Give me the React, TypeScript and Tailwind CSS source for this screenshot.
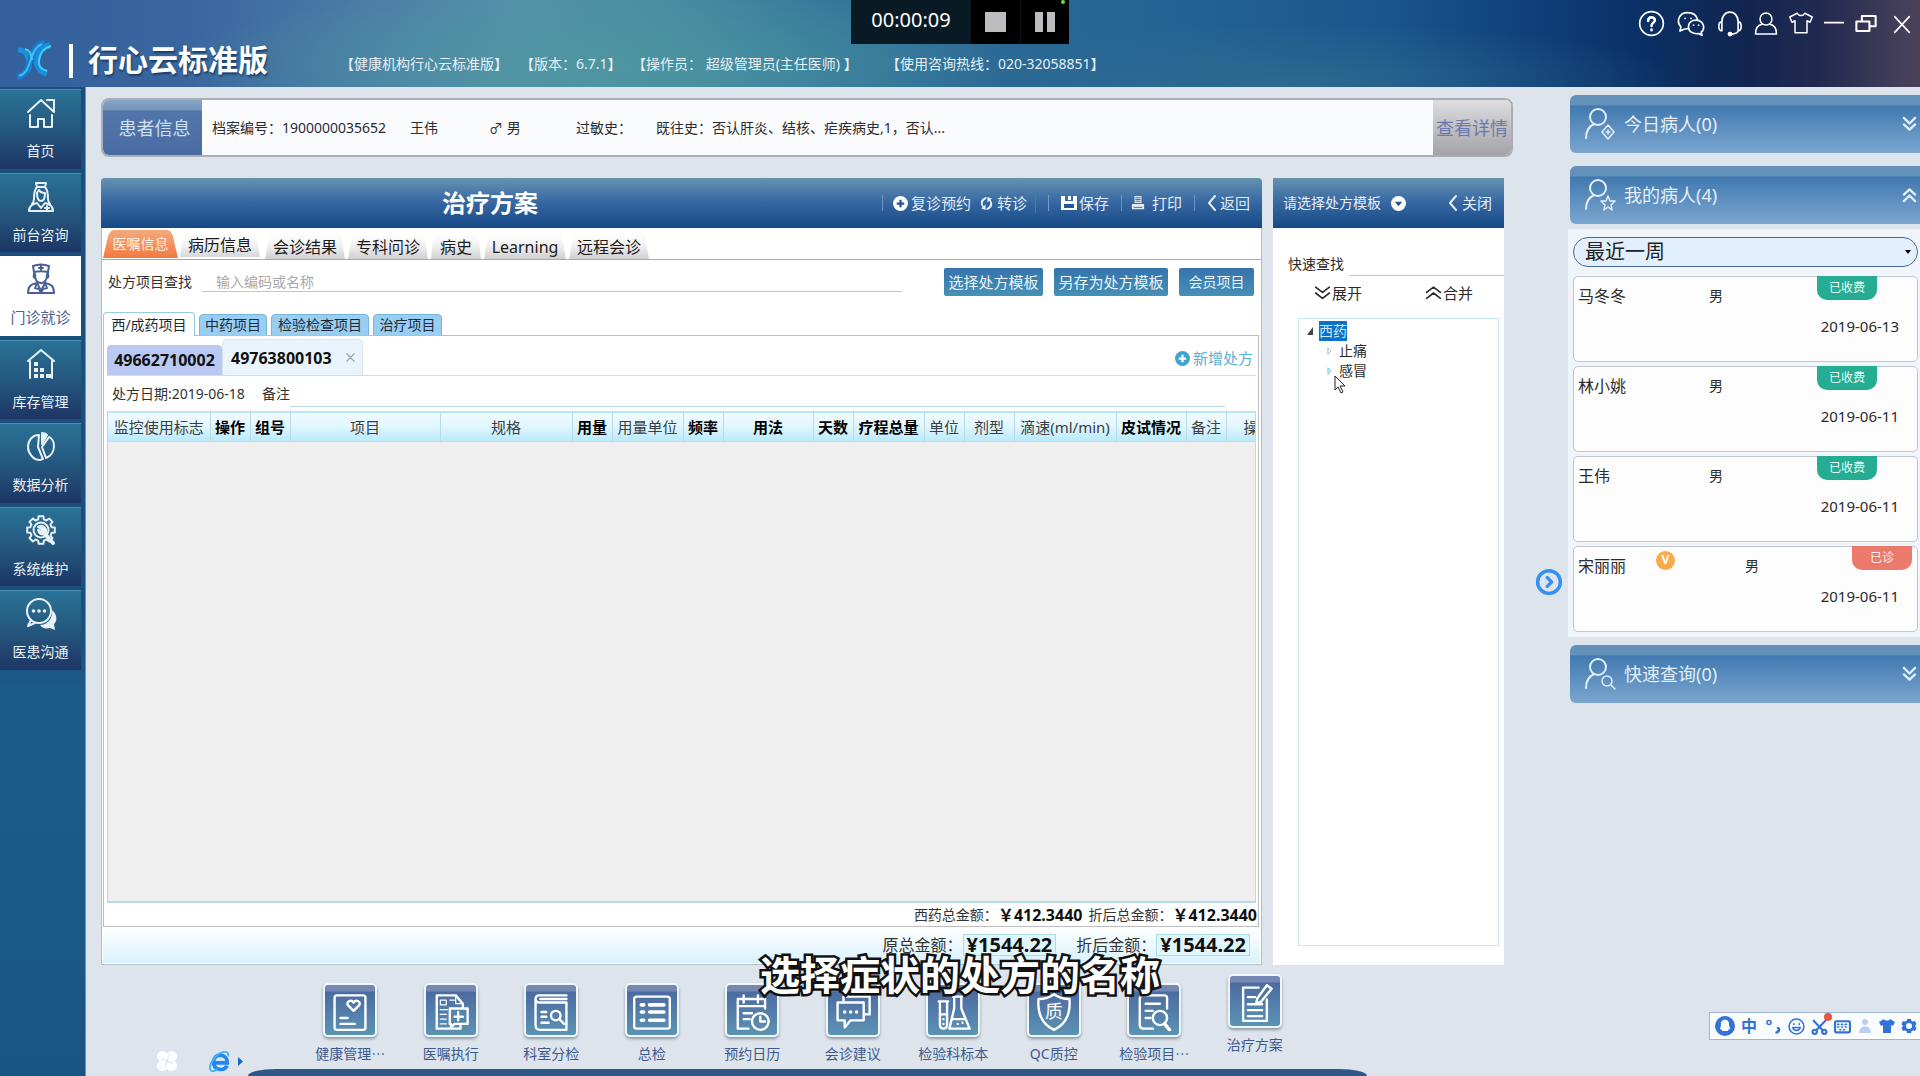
import type { ReactNode } from "react";

interface IconProps {
    className?: string;
    children?: ReactNode;
    box?: string;
    width?: number;
}

function Icon({ className = "w-6 h-6", children, box = "0 0 32 32", width = 2 }: IconProps) {
    return (
        <svg viewBox={box} className={className} fill="none" stroke="currentColor" strokeWidth={width} strokeLinecap="round" strokeLinejoin="round" aria-hidden="true">
            {children}
        </svg>
    );
}

/* ---------- data ---------- */

const navItems = [
    {
        label: "首页",
        icon: <><path d="M3 15 16 3l6 5.500M29 15V3h-7M29 15 22 8.500" /><path d="M5 18v12h8v-8h6v8h8V18" /></>,
    },
    {
        label: "前台咨询",
        icon: <><path d="M11 2h10l-1 4h-8zM12 6c-3 3-3 7-3 12M20 6c3 3 3 7 3 12" /><path d="M12 12c0 6 2 8 4 8s4-2 4-8c-3 0-5-1-6-3-1 2-2 2-2 3zM9 18c0 3-1 4-2 5M23 18c0 3 1 4 2 5" /><path d="M12 22c-5 1-8 3-8 8h24c0-5-3-7-8-8l-4 5zM22 25v4M20 27h4" /></>,
    },
    {
        label: "门诊就诊",
        active: true,
        icon: <><path d="M9 9 8 3c5-2 11-2 16 0l-1 6c-5-1-9-1-14 0zM9 9v4M23 9v4M16 3v4M14 5h4" /><path d="M10 11c0 6 2 9 6 9s6-3 6-9M9 12c-1 1 0 3 1 3M23 12c1 1 0 3-1 3" /><path d="M12 20c-6 1-9 3-9 10h26c0-7-3-9-9-10l-4 8zM12 20l-2 5 4 1 2 4 2-4 4-1-2-5" /></>,
    },
    {
        label: "库存管理",
        icon: <><path d="M3 13 16 2l13 11M5 13v17M27 13v17" /><g fill="currentColor" stroke="none"><path d="M9 14h4v4H9zM9 20h4v4H9zM15 20h4v4h-4zM9 26h4v4H9zM15 26h4v4h-4zM21 26h5v4h-5z" /></g></>,
    },
    {
        label: "数据分析",
        icon: <><path d="M14 4C7 4 3 10 3 16s5 13 12 13l3-1-5-12zM17 16l4 11c5-2 8-7 8-12 0-4-2-8-5-9z" /><path d="M17 13V2c2 0 4 1 5 2z" fill="currentColor" /></>,
    },
    {
        label: "系统维护",
        icon: <><path d="M13.200 4.400 13.600 1.200h4.800l.4 3.200 2.700 1.100 2.600-2 3.400 3.400-2 2.600 1.100 2.700 3.200.4v4.800l-3.200.4-1.100 2.700 2 2.600-3.400 3.400-2.600-2-2.700 1.100-.4 3.200h-4.800l-.4-3.200-2.700-1.100-2.600 2-3.400-3.400 2-2.600-1.100-2.700-3.200-.4v-4.800l3.200-.4 1.100-2.700-2-2.600 3.400-3.400 2.600 2z" /><circle cx="16" cy="15" r="7.500" /><path d="m19 18 9 10" strokeWidth="4" /><path d="M13 12a5 5 0 0 1 7 7 5 5 0 0 1-7-4l3 1 1-2z" fill="currentColor" /></>,
    },
    {
        label: "医患沟通",
        icon: <><circle cx="14" cy="13" r="12" /><path d="m6 22-3 6 7-3" /><g fill="currentColor" stroke="none"><circle cx="8.500" cy="13" r="1.800" /><circle cx="14" cy="13" r="1.800" /><circle cx="19.500" cy="13" r="1.800" /><path d="M27 12c6 5 5 12 2 14l1 6-5-2c-5 1-8 0-10-3 8 0 13-7 12-15z" /></g></>,
    },
];

const mainTabs = [
    { label: "会诊结果", width: "w-20" },
    { label: "专科问诊", width: "w-20" },
    { label: "病史", width: "w-[50px]" },
    { label: "Learning", width: "w-[82px]" },
    { label: "远程会诊", width: "w-20" },
];

const columns = [
    { label: "监控使用标志", width: "w-[102px]" },
    { label: "操作", width: "w-10", bold: true },
    { label: "组号", width: "w-10", bold: true },
    { label: "项目", width: "w-[150px]" },
    { label: "规格", width: "w-[132px]" },
    { label: "用量", width: "w-10", bold: true },
    { label: "用量单位", width: "w-[71px]" },
    { label: "频率", width: "w-10", bold: true },
    { label: "用法", width: "w-[90px]", bold: true },
    { label: "天数", width: "w-10", bold: true },
    { label: "疗程总量", width: "w-[71px]", bold: true },
    { label: "单位", width: "w-10" },
    { label: "剂型", width: "w-[50px]" },
    { label: "滴速(ml/min)", width: "w-[102px]" },
    { label: "皮试情况", width: "w-[70px]", bold: true },
    { label: "备注", width: "w-10" },
];

const patients = [
    { name: "马冬冬", sex: "男", date: "2019-06-13", paid: true },
    { name: "林小姚", sex: "男", date: "2019-06-11", paid: true },
    { name: "王伟", sex: "男", date: "2019-06-11", paid: true },
    { name: "宋丽丽", sex: "男", date: "2019-06-11", paid: false },
];

const dockItems = [
    { label: "健康管理⋯", icon: <><rect x="3" y="2" width="26" height="29" rx="2" /><path d="m19 15-5-5c-1-3 3-5 5-2 2-3 6-1 5 2zM8 21h6M8 26h12" /></> },
    { label: "医嘱执行", icon: <><path d="M26 12V9l-6-7H4v28h20v-3" /><path d="M7 6h5v4H7zM15 6h4M7 14h6M7 18h5M7 22h5M7 26h5M20 3v6h5" strokeWidth="1" /><path d="M15 13h15v13H19l-3 3v-3h-1z" fill="#5485aa" /><path d="M22 16v7M19 20h7" /></> },
    { label: "科室分检", icon: <><path d="M29 2H6c-4 0-4 6 0 6h23v23H7c-3 0-4-1-4-4V5M29 5H7" /><circle cx="20" cy="19" r="4" /><path d="m23 22 4 4M8 16h4M8 20h4M8 25h6" /></> },
    { label: "总检", icon: <><rect x="1" y="3" width="30" height="27" rx="2" /><path d="M7 10h2M14 10h12M7 16h2M14 16h12M7 23h2M14 23h12" strokeWidth="3" /></> },
    { label: "预约日历", icon: <><path d="M27 13V5H4v25h9M9 2v6M21 2v6M4 11h23M9 17h7M9 22h5" /><circle cx="23" cy="24" r="7" /><path d="M23 20v4h4" /></> },
    { label: "会诊建议", icon: <><path d="M8 7V3h22v15h-4" /><path d="M3 8h22v15H14l-5 6v-6H3z" /><path d="M9 16h0M14 16h0M19 16h0" strokeWidth="3" /></> },
    { label: "检验科标本", icon: <><path d="M4 7h8M5 7v20c0 4 6 4 6 0V7M5 18h6M16 3h8M17 3v10l-4 17h17L23 13V3M15 22h11" /><path d="M20 26h0M24 25h0M8 22h0M8 26h0" /></> },
    { label: "QC质控", icon: <><path d="M16 1c4 3 8 4 13 4 1 12-2 21-13 26C5 26 2 17 3 5c5 0 9-1 13-4z" /><text x="16" y="21" textAnchor="middle" fontSize="15" fill="currentColor" stroke="none">质</text></> },
    { label: "检验项目⋯", icon: <><path d="M27 13V4c0-1-1-2-2-2H7C5 2 4 3 4 5v22c0 2 1 3 3 3h8M9 9h12M9 15h6M9 21h4" /><circle cx="21" cy="21" r="6" /><path d="m25 26 4 5" strokeWidth="3" /></> },
    { label: "治疗方案", lifted: true, icon: <><path d="M19 3H6v28h20V13M10 11h6M10 17h12M10 22h12M10 27h12" /><path d="M26 1l4 3-9 11-4 1 1-4z" /></> },
];

/* ---------- header ---------- */

function Header() {
    return (
        <header className="relative flex h-[87px] shrink-0 text-white bg-[radial-gradient(ellipse_22%_90%_at_31%_75%,#4d979fcc_0%,#4d979f00_100%),radial-gradient(ellipse_20%_70%_at_68%_95%,#35718e99_0%,#35718e00_100%),linear-gradient(90deg,#33609b_0%,#3a669f_10%,#4c7fa8_20%,#5790ab_27%,#4a8da3_34%,#377a9c_42%,#2a6896_52%,#246293_62%,#1c558c_72%,#0e3f78_80%,#0a2f64_86%,#12254f_91%,#23294f_95%,#443f5a_99%,#4a4158_100%)]">
            <div className="flex items-end gap-[15px] pl-[14px] pb-[7px]">
                <svg viewBox="0 0 40 40" className="w-10 h-10" fill="none" strokeLinecap="butt" aria-hidden="true">
                    <path d="M4 10c8 0 9 5 11 12 1 4 0 8-2 10" stroke="#1c8fdc" strokeWidth="5" />
                    <path d="M3 37c8-1 10-7 12-13C18 15 20 5 31 2" stroke="#1a7bd0" strokeWidth="6" />
                    <path d="M5 36c7-2 9-8 11-14 3-9 5-15 12-18" stroke="#38c2f2" strokeWidth="2" />
                    <path d="M36 5c-9 2-12 8-13 15s3 11 10 14" stroke="#1b8be0" strokeWidth="6" />
                    <path d="M37 6c-8 2-11 7-12 14s2 9 8 11M11 9c5 1 6 5 7 11" stroke="#3fd0f5" strokeWidth="2" />
                </svg>
                <span className="w-[4px] h-[34px] mb-[2px] bg-white" />
                <h1 className="text-[30px] leading-10 font-bold [text-shadow:1px_2px_2px_#1d3d66]">行心云标准版</h1>
            </div>
            <div className="flex items-end pl-[72px] pb-[13px] text-sm leading-5 text-[#e4f0f6] whitespace-pre">
                <span className="w-[180px]">【健康机构行心云标准版】</span>
                <span className="w-[112px]">【版本：6.7.1】</span>
                <span className="w-[254px]">【操作员： 超级管理员(主任医师) 】</span>
                <span>【使用咨询热线：020-32058851】</span>
            </div>
            <div className="flex items-start gap-[11px] ml-auto pt-[10px] pr-[9px]">
                <button aria-label="帮助"><Icon className="w-[27px] h-[27px]" width={2}><circle cx="16" cy="16" r="14" /><path d="M12 13c0-6 8-5 8-1 0 3-4 3-4 7M16 23v1" strokeWidth="3" /></Icon></button>
                <button aria-label="微信"><Icon className="w-[30px] h-[27px]" width={2}><path d="M13 22c-3 1-5 0-6 1l-4 2 1-5C-2 13 2 3 12 3c7 0 11 4 12 9" /><path d="M22 12c5 0 9 4 9 8 0 3-1 5-3 6l1 4-4-2c-7 1-12-3-12-8s4-8 9-8zM9 10h0M16 10h0M19 18h0M25 18h0" /></Icon></button>
                <button aria-label="客服"><Icon className="w-[26px] h-[27px]" width={2}><path d="M6 14C6 7 10 2 16 2s10 5 10 12M6 14c-5 0-5 11 0 11zM26 14c5 0 5 11 0 11zM26 25c-1 3-4 4-8 4" /><circle cx="16" cy="29" r="2" fill="currentColor" /></Icon></button>
                <button aria-label="用户"><Icon className="w-6 h-[27px]" width={2}><circle cx="16" cy="10" r="8" /><path d="M11 17C5 18 2 23 2 30h28c0-7-3-12-9-13" /></Icon></button>
                <button aria-label="皮肤"><Icon className="w-6 h-[26px]" width={2}><path d="M11 3c2 4 8 4 10 0l10 5-3 7-4-2v16H8V13l-4 2-3-7z" /></Icon></button>
                <button aria-label="最小化"><Icon className="w-5 h-6" width={3}><path d="M1 17h30" /></Icon></button>
                <button aria-label="还原"><Icon className="w-[22px] h-[27px]" width={3}><path d="M2 13h19v14H2zM10 13V5h20v15h-9" /></Icon></button>
                <button aria-label="关闭" className="ml-[5px]"><Icon className="w-[18px] h-7" width={3}><path d="m3 3 26 28M29 3 3 31" /></Icon></button>
            </div>
        </header>
    );
}

function Recorder() {
    return (
        <div className="absolute top-0 left-1/2 -translate-x-1/2 flex h-11 bg-black text-white">
            <span className="w-[120px] pt-[6px] text-center text-xl leading-7 bg-[#0a1a24]">00:00:09</span>
            <button aria-label="停止" className="flex items-center justify-center w-[49px]"><span className="w-[21px] h-5 bg-[#bdbdc0]" /></button>
            <button aria-label="暂停" className="flex items-center justify-center gap-1 w-[49px] border-l border-[#101418]">
                <span className="w-2 h-5 bg-[#bdbdc0]" /><span className="w-2 h-5 bg-[#bdbdc0]" />
            </button>
            <span className="absolute top-0 right-1 w-1 h-1 rounded-full bg-[#6be02a]" />
        </div>
    );
}

/* ---------- left navigation ---------- */

function Sidebar() {
    return (
        <nav className="w-[86px] shrink-0 pr-1 pt-[2px] bg-[linear-gradient(180deg,#1a4e7c_0%,#1b4f7e_55%,#1c5c8a_62%,#1b5a88_80%,#1a5482_100%)] border-r border-[#6f93b3]">
            <ul className="grid auto-rows-fr gap-1 h-[581px]">
                {navItems.map((item) => (
                    <li key={item.label} className="flex">
                        <a href="#" className={item.active
                            ? "flex flex-col items-center w-full pt-[7px] bg-white text-[#4c5f98]"
                            : "flex flex-col items-center w-full pt-[7px] text-[#e8f1f6] border-t border-[#4a8fb0] bg-linear-to-b from-[#2a7297] via-[#25587f] to-[#1d3564]"}>
                            <Icon className="w-8 h-8">{item.icon}</Icon>
                            <span className={item.active ? "mt-3 text-[15px] leading-5" : "mt-3 text-sm leading-5"}>{item.label}</span>
                        </a>
                    </li>
                ))}
            </ul>
        </nav>
    );
}

/* ---------- centre ---------- */

function PatientBar() {
    return (
        <section className="flex mt-[11px] h-[59px] shrink-0 rounded-[8px] border-2 border-[#aaadb5] bg-[#fafbfd] overflow-hidden text-sm text-[#2a2c33]">
            <h2 className="flex items-center justify-center w-[99px] pl-1 text-lg text-[#cfdff0] bg-[linear-gradient(180deg,#86a3c4_0%,#7595bb_18%,#5276aa_20%,#4a6ca4_100%)]">患者信息</h2>
            <div className="flex items-center flex-1 pl-[10px]">
                <span className="w-[198px]">档案编号：1900000035652</span>
                <span className="w-[79px]">王伟</span>
                <span className="w-[87px]">♂ 男</span>
                <span className="w-20">过敏史：</span>
                <span>既往史：否认肝炎、结核、疟疾病史,1，否认...</span>
            </div>
            <button className="w-[78px] text-lg text-[#6b78ad] bg-linear-to-b from-[#dedee0] to-[#a3a3a8]">查看详情</button>
        </section>
    );
}

function PlanHeader() {
    return (
        <div className="flex items-center h-[50px] shrink-0 pr-3 rounded-t-[4px] text-white bg-linear-to-b from-[#6592b0] via-[#3566a1] to-[#154a86]">
            <h2 className="ml-[341px] text-2xl leading-8 font-bold">治疗方案</h2>
            <div className="flex items-center ml-auto text-[15px] text-[#e1ebf5]">
                <span className="w-px h-4 mr-[10px] bg-[#6f93c0]" />
                <button className="flex items-center gap-[3px] mr-2">
                    <svg viewBox="0 0 16 16" className="w-[15px] h-[15px]" aria-hidden="true"><circle cx="8" cy="8" r="8" fill="#fff" /><path d="M8 4v8M4 8h8" stroke="#235392" strokeWidth="2.400" /></svg>
                    复诊预约
                </button>
                <button className="flex items-center gap-[3px] mr-2">
                    <svg viewBox="0 0 16 16" className="w-[15px] h-[15px]" fill="#e8f0f8" aria-hidden="true"><path d="M8 1C2 2 0 8 4 12l-2 1 5 2V9l-2 2C3 8 4 5 8 3zM8 15c6-1 8-7 4-11l2-1-5-2v6l2-2c2 3 1 6-3 8z" /></svg>
                    转诊
                </button>
                <span className="w-px h-5 mr-3 bg-[#4d78ad]" />
                <span className="w-px h-4 mr-3 bg-[#7b9cc6]" />
                <button className="flex items-center gap-[2px] mr-3">
                    <svg viewBox="0 0 16 16" className="w-4 h-4" fill="#fff" aria-hidden="true"><path d="M0 1h4v5h8V1h4v14H0zM7 1h3v4H7z" /><path fill="#27579a" d="M3 9h10v4H3z" /></svg>
                    保存
                </button>
                <span className="w-px h-4 mr-[9px] bg-[#6f93c0]" />
                <button className="flex items-center gap-[7px] mr-3">
                    <svg viewBox="0 0 16 16" className="w-[14px] h-4" fill="#e1ebf5" aria-hidden="true"><path d="M4 0h8v8H4zM1 9h14v6H1z" /><path d="M5 2h6M5 4h6M5 6h6M3 13h10" stroke="#2f5f9c" /></svg>
                    打印
                </button>
                <span className="w-px h-4 mr-3 bg-[#6f93c0]" />
                <button className="flex items-center gap-[3px]">
                    <Icon className="w-[10px] h-4" box="0 0 10 16"><path d="M8 1 2 8l6 7" /></Icon>
                    返回
                </button>
            </div>
        </div>
    );
}

function MainTabs() {
    return (
        <div className="flex items-end h-8 shrink-0 pl-px border-b border-[#a9a9ad] text-base leading-6 text-[#1c1c1c]">
            <button className="w-[75px] h-7 mb-px mr-[2px] text-sm text-[#fff0e4] bg-linear-to-b from-[#f3a97c] to-[#f27a3f] [clip-path:polygon(0_100%,7%_20%,10%_5%,14%_0,86%_0,90%_5%,93%_20%,100%_100%)]">医嘱信息</button>
            <button className="w-20 h-6 mb-[2px] mr-[5px] bg-linear-to-b from-white via-[#f3f3f3] to-[#d6d6d6] [clip-path:polygon(0_100%,5%_0,95%_0,100%_100%)]">病历信息</button>
            {mainTabs.map((tab) => (
                <button key={tab.label} className={`${tab.width} h-6 mr-[3px] bg-linear-to-b from-white via-[#eeeeee] to-[#cfcfcf] [clip-path:polygon(0_100%,5%_0,95%_0,100%_100%)]`}>{tab.label}</button>
            ))}
        </div>
    );
}

function PlanSearch() {
    return (
        <div className="flex items-center h-11 shrink-0 pl-[6px] pr-[7px]">
            <label htmlFor="item" className="text-sm">处方项目查找</label>
            <input id="item" placeholder="输入编码或名称" className="flex-1 h-5 ml-[10px] mr-[42px] pl-[14px] text-sm border-b border-[#a9cde2] outline-none placeholder:text-[#a9a9a9]" />
            <div className="flex gap-[11px] text-[15px] text-[#eaf4fa]">
                <button className="w-[99px] h-7 rounded-[2px] bg-linear-to-b from-[#3673ac] to-[#4690b6]">选择处方模板</button>
                <button className="w-[114px] h-7 rounded-[2px] bg-linear-to-b from-[#3673ac] to-[#4690b6]">另存为处方模板</button>
                <button className="w-[75px] h-7 rounded-[2px] text-sm bg-linear-to-b from-[#3673ac] to-[#4690b6]">会员项目</button>
            </div>
        </div>
    );
}

function PrescriptionTable() {
    return (
        <div className="flex-1 ml-[3px] mr-[2px] border-x border-b-2 border-[#b4dde6] bg-[#efefef] overflow-hidden">
            <table className="table-fixed w-full text-[15px] leading-6">
                <thead>
                    <tr className="h-[30px] border-y border-[#b5e2f2] bg-linear-to-b from-[#f1fbff] via-[#e0f6fe] to-[#b9e9fc]">
                        {columns.map((col) => (
                            <th key={col.label} className={`${col.width} p-0 border-r border-[#b9d9e6] whitespace-nowrap ${col.bold ? "font-bold text-black" : "font-normal text-[#3a3f44]"}`}>{col.label}</th>
                        ))}
                        <th className="p-0 pl-[17px] font-normal text-left text-[#3a3f44] whitespace-nowrap overflow-hidden">操作</th>
                    </tr>
                </thead>
                <tbody />
            </table>
        </div>
    );
}

function Prescription() {
    return (
        <div className="flex flex-col flex-1 -mt-px ml-px mr-[2px] border border-[#bdbdc0]">
            <div className="flex items-end h-10 shrink-0 ml-[3px] mr-[2px] border-b border-[#d8dbe0] text-base leading-6 font-bold text-[#111]">
                <button className="w-[115px] h-[30px] rounded-t-[4px] bg-[#bac9f4]">49662710002</button>
                <div className="flex items-center w-[141px] h-9 pl-2 rounded-t-[5px] border border-b-0 border-[#dbe4ec] bg-[#eaf4fc]">
                    <button>49763800103</button>
                    <button aria-label="关闭处方" className="ml-[14px] text-[#a6adb3]"><Icon className="w-[9px] h-[9px]" width={5}><path d="m3 3 26 26M29 3 3 29" /></Icon></button>
                </div>
                <button className="flex items-center gap-[3px] ml-auto mr-[3px] mb-[5px] text-[15px] font-normal text-[#5bb0d6]">
                    <svg viewBox="0 0 16 16" className="w-[15px] h-[15px]" aria-hidden="true"><circle cx="8" cy="8" r="8" fill="#3fa3d3" /><path d="M8 4v8M4 8h8" stroke="#fff" strokeWidth="2.400" /></svg>
                    新增处方
                </button>
            </div>
            <div className="flex items-center h-[35px] shrink-0 pl-2 text-sm">
                <span className="w-[150px]">处方日期:2019-06-18</span>
                <label htmlFor="remark">备注</label>
                <input id="remark" className="flex-1 self-end h-5 mb-1 mr-[33px] border-b border-[#b5dbe6] outline-none" />
            </div>
            <PrescriptionTable />
            <div className="flex items-center justify-end h-[23px] shrink-0 pr-px text-sm whitespace-nowrap">
                <span>西药总金额：</span><b className="text-base leading-6 text-[#111]">￥412.3440</b>
                <span className="ml-[6px]">折后总金额：</span><b className="text-base leading-6 text-[#111]">￥412.3440</b>
            </div>
        </div>
    );
}

function PlanPanel() {
    return (
        <section className="flex flex-col flex-1 min-w-0">
            <PlanHeader />
            <div className="flex flex-col flex-1 border border-t-0 border-[#b7bcc9] bg-white text-[#333]">
                <MainTabs />
                <PlanSearch />
                <div className="flex items-end gap-1 h-8 shrink-0 pl-px text-sm leading-5 text-[#1d2b38]">
                    <button className="relative z-10 w-[92px] h-6 rounded-t-[4px] border border-b-0 border-[#9ccbe6] bg-white">西/成药项目</button>
                    <button className="w-[68px] h-[22px] rounded-t-[4px] border border-[#76b5e0] bg-[#99cef3]">中药项目</button>
                    <button className="w-[98px] h-[22px] rounded-t-[4px] border border-[#76b5e0] bg-[#99cef3]">检验检查项目</button>
                    <button className="w-[69px] h-[22px] rounded-t-[4px] border border-[#76b5e0] bg-[#99cef3]">治疗项目</button>
                </div>
                <Prescription />
                <div className="flex items-center justify-end h-9 shrink-0 mx-px mb-px pr-[10px] bg-linear-to-b from-white to-[#d9f2fd] text-base whitespace-nowrap">
                    <span>原总金额：</span>
                    <b className="px-[3px] border border-[#a8dce8] bg-[#dff6fd] text-xl leading-5 text-[#111]">¥1544.22</b>
                    <span className="ml-5">折后金额：</span>
                    <b className="px-[3px] border border-[#a8dce8] bg-[#dff6fd] text-xl leading-5 text-[#111]">¥1544.22</b>
                </div>
            </div>
        </section>
    );
}

function TemplatePanel() {
    return (
        <section className="flex flex-col w-[231px] shrink-0 bg-white text-[15px] text-[#2a2a2a]">
            <div className="flex items-center h-[50px] shrink-0 pl-[10px] pr-3 text-[#e6eef7] bg-linear-to-b from-[#6592b0] via-[#3566a1] to-[#154a86]">
                <h2 className="text-sm">请选择处方模板</h2>
                <button aria-label="选择模板" className="ml-[10px]">
                    <svg viewBox="0 0 16 16" className="w-[15px] h-[15px]" aria-hidden="true"><circle cx="8" cy="8" r="8" fill="#fff" /><path d="M4 6h8l-4 5z" fill="#255591" /></svg>
                </button>
                <button className="flex items-center gap-1 ml-auto">
                    <Icon className="w-[10px] h-4" box="0 0 10 16"><path d="M8 1 2 8l6 7" /></Icon>
                    关闭
                </button>
            </div>
            <div className="flex items-end h-12 shrink-0 pl-[15px] text-sm">
                <label htmlFor="quick" className="leading-6">快速查找</label>
                <input id="quick" className="flex-1 min-w-0 h-6 ml-[5px] border-b border-[#9bd3e8] outline-none" />
            </div>
            <div className="flex h-[42px] shrink-0 pt-[7px] pl-[41px] leading-5">
                <button className="flex h-5 gap-px w-[111px]"><Icon className="w-[17px] h-5" width={3}><path d="m3 5 13 10L29 5M3 16l13 10 13-10" /></Icon>展开</button>
                <button className="flex h-5 gap-px"><Icon className="w-[17px] h-5" width={3}><path d="m3 15 13-10 13 10M3 26l13-10 13 10" /></Icon>合并</button>
            </div>
            <div className="relative flex-1 ml-[25px] mr-[5px] mb-[19px] pt-[2px] border border-[#c9e7ef] text-sm">
                <ul className="pl-[7px]">
                    <li>
                        <div className="flex items-center h-5">
                            <svg viewBox="0 0 8 8" className="w-2 h-2" fill="#444" aria-hidden="true"><path d="M7 0v8H1z" /></svg>
                            <span className="ml-[5px] bg-[#0c71c9] text-[#cfe6fb] leading-5">西药</span>
                        </div>
                        <ul className="pl-[21px]">
                            <li className="flex items-center gap-[7px] h-5">
                                <svg viewBox="0 0 6 10" className="w-[5px] h-2" fill="#fff" stroke="#9aa7b0" aria-hidden="true"><path d="m1 1 4 4-4 4z" /></svg>止痛
                            </li>
                            <li className="flex items-center gap-[7px] h-5">
                                <svg viewBox="0 0 6 10" className="w-[5px] h-2" fill="#cdeffc" stroke="#5fc3e8" aria-hidden="true"><path d="m1 1 4 4-4 4z" /></svg>感冒
                            </li>
                        </ul>
                    </li>
                </ul>
                {/* mouse pointer */}
                <svg viewBox="0 0 12 19" className="absolute left-[35px] top-[56px] w-3 h-[19px]" fill="#fff" stroke="#222" aria-hidden="true"><path d="M1 1v14l3-3 3 6 2-1-3-6h5z" /></svg>
            </div>
        </section>
    );
}

function Dock() {
    return (
        <footer className="flex h-[111px] shrink-0">
            <div className="flex items-end w-[147px] pl-[55px] pb-1">
                <button aria-label="应用">
                    <svg viewBox="0 0 24 24" className="w-[22px] h-[22px]" fill="#fbfdfe" aria-hidden="true"><circle cx="7" cy="7" r="6" /><circle cx="17" cy="7" r="6" /><circle cx="7" cy="17" r="6" /><circle cx="17" cy="17" r="6" /><path d="M5 10q4-1 7 2t7 2M14 5q-1 4-2 7t-2 7" stroke="#dbe3ec" fill="none" /></svg>
                </button>
                <button aria-label="浏览器" className="flex items-center gap-2 ml-[30px]">
                    <svg viewBox="0 0 24 24" className="w-[22px] h-[22px]" fill="none" aria-hidden="true"><path d="M21 17c-4 7-15 5-15-4 0-10 15-10 15 1H7" stroke="#2387ee" strokeWidth="4" /><path d="M22 7c1-6-5-6-10-3C5 9 0 18 3 22c1 2 5 1 7-1" stroke="#45b4f5" strokeWidth="2" /></svg>
                    <svg viewBox="0 0 5 9" className="w-[5px] h-[9px]" fill="#1767c0" aria-hidden="true"><path d="M0 0v9l5-4.500z" /></svg>
                </button>
            </div>
            <div className="flex flex-col justify-end w-[1119px]">
                <ul className="grid grid-cols-10 w-[1005px] ml-[52px] mb-[5px]">
                    {dockItems.map((item) => (
                        <li key={item.label} className={item.lifted ? "-translate-y-[9px]" : ""}>
                            <a href="#" className="flex flex-col items-center gap-[7px] text-sm leading-5 text-[#3d5a8c] whitespace-nowrap">
                                <span className="flex items-center justify-center w-[54px] h-[54px] pt-1 rounded-[5px] border-2 border-[#eef6fb] shadow-[0_2px_3px_#8e9aa8] text-white bg-[linear-gradient(180deg,#7488b3_0%,#7488b3_12%,#4c6ba1_14%,#5b93b3_100%)]">
                                    <Icon className="w-[38px] h-[38px]">{item.icon}</Icon>
                                </span>
                                {item.label}
                            </a>
                        </li>
                    ))}
                </ul>
                <div className="h-[7px] rounded-t-[28px_7px] bg-[#2e5788]" />
            </div>
        </footer>
    );
}

/* ---------- right column ---------- */

function GroupHeader({ label, mark, open }: { label: string; mark: ReactNode; open?: boolean }) {
    return (
        <button className="flex items-center w-full h-[58px] shrink-0 pl-[14px] pr-[3px] rounded-l-[6px] text-[#e3eef8] text-lg bg-[linear-gradient(180deg,#6491ba_0%,#6491ba_17%,#4179b0_19%,#7ba6d0_100%)]">
            <Icon className="w-8 h-8"><circle cx="14" cy="9" r="8" /><path d="M10 16c-6 3-8 8-8 14" />{mark}</Icon>
            <span className="ml-2">{label}</span>
            <Icon className="w-[15px] h-4 ml-auto" width={5}>
                {open ? <path d="M4 15 16 4l12 11M4 29l12-12 12 12" /> : <path d="m4 3 12 12L28 3M4 17l12 11 12-11" />}
            </Icon>
        </button>
    );
}

function PatientList() {
    return (
        <div className="-ml-[2px] mt-[5px] mb-2 pt-2 pb-[5px] pl-[5px] pr-[2px] bg-[#f0f5fb]">
            <div className="relative mb-[9px]">
                <select aria-label="时间范围" className="appearance-none w-full h-[30px] pl-[11px] rounded-full border border-[#4a6a96] bg-[#e2f0fe] text-xl leading-7 text-[#222]">
                    <option>最近一周</option>
                </select>
                <svg viewBox="0 0 6 4" className="absolute right-[7px] top-[13px] w-[6px] h-1 pointer-events-none" aria-hidden="true"><path d="M0 0h6L3 4z" /></svg>
            </div>
            <ul className="flex flex-col gap-1">
                {patients.map((p) => (
                    <li key={p.name} className="relative h-[86px] rounded-[5px] border border-[#c1c5cc] bg-[#fdfdfe] text-[#2b2b2b]">
                        <div className="flex items-center pt-[7px] pl-1 leading-6">
                            <span className={p.paid ? "w-[131px]" : "w-[78px]"}>{p.name}</span>
                            {!p.paid && <span className="flex items-center justify-center w-[19px] h-[19px] mr-[70px] -mt-3 rounded-full bg-[#f9ab4b] text-xs font-bold text-white">V</span>}
                            <span className="text-sm">{p.sex}</span>
                        </div>
                        <div className="mt-2 pr-[18px] text-right text-[15px] leading-5">{p.date}</div>
                        <span className={p.paid
                            ? "absolute -top-px right-10 w-[60px] h-6 rounded-b-[10px] bg-[#24ad93] text-center text-xs leading-6 text-[#e6fbf6]"
                            : "absolute -top-px right-[5px] w-[60px] h-6 rounded-b-[10px] bg-[#ec7a6c] text-center text-xs leading-6 text-[#fdeceb]"}>
                            {p.paid ? "已收费" : "已诊"}
                        </span>
                    </li>
                ))}
            </ul>
        </div>
    );
}

function PatientsAside() {
    return (
        <aside className="flex flex-col w-[350px] shrink-0 pt-2">
            <GroupHeader label="今日病人(0)" mark={<path d="m24 17 6 7-6 7-6-7zM24 22v4M22 24h4" strokeWidth="1.500" />} />
            <div className="h-[13px] shrink-0" />
            <GroupHeader label="我的病人(4)" open mark={<path d="m24 17 2 5h5l-4 4 1 5-4-3-4 3 1-5-4-4h5z" strokeWidth="1.500" />} />
            <PatientList />
            <GroupHeader label="快速查询(0)" mark={<path d="M28 23a5 5 0 1 1-10 0 5 5 0 0 1 10 0zM27 27l4 4" strokeWidth="1.500" />} />
        </aside>
    );
}

function ImeBar() {
    return (
        <div className="absolute right-0 bottom-9 flex items-center gap-[6px] h-7 pl-[5px] pr-[3px] border border-r-0 border-[#9fb4d3] bg-[#fafdff] text-[#3273d8]">
            <svg viewBox="0 0 20 20" className="w-5 h-5" aria-hidden="true"><circle cx="10" cy="10" r="10" fill="currentColor" /><path d="M6 9c-1-7 9-7 8 0l1 4-2 1v1H7v-1l-2-1z" fill="#fff" /></svg>
            <span className="w-4 text-base leading-6 font-bold">中</span>
            <Icon className="w-4 h-4 ml-[3px]" width={3}><circle cx="6" cy="9" r="4" /><path d="M24 20c4 2 2 7-3 9" strokeWidth="5" /></Icon>
            <Icon className="w-[17px] h-[17px]" width={3}><circle cx="16" cy="16" r="14" /><path d="M9 18c2 7 12 7 14 0zM11 11v1M21 11v1" /></Icon>
            <span className="relative">
                <Icon className="w-[17px] h-[17px]" width={4}><path d="m5 5 17 18M27 5 10 23" /><circle cx="7" cy="26" r="4" /><circle cx="25" cy="26" r="4" /></Icon>
                <span className="absolute -top-[5px] -right-1 w-2 h-2 rounded-full bg-[#e9543f]" />
            </span>
            <Icon className="w-[17px] h-[17px]" width={4}><rect x="2" y="6" width="28" height="21" rx="2" /><path d="M7 12h18M7 17h18M11 22h10" strokeWidth="3" strokeDasharray="2 5" /></Icon>
            <svg viewBox="0 0 16 16" className="w-4 h-4" fill="#bccff2" aria-hidden="true"><circle cx="8" cy="4" r="3" /><path d="M2 15c0-9 12-9 12 0z" /></svg>
            <svg viewBox="0 0 16 16" className="w-4 h-4" fill="currentColor" aria-hidden="true"><path d="M5 1c1 2 5 2 6 0l5 3-2 4-2-1v8H4V7L2 8 0 4z" /></svg>
            <svg viewBox="0 0 32 32" className="w-4 h-4" fill="currentColor" aria-hidden="true"><path fillRule="evenodd" d="m12 2h8l1 4 3 1 4-1 3 6-3 4 3 4-3 6-4-1-3 1-1 4h-8l-1-4-3-1-4 1-3-6 3-4-3-4 3-6 4 1 3-1zM16 10a6 6 0 1 0 0 12 6 6 0 0 0 0-12z" /></svg>
        </div>
    );
}

export default function App() {
    return (
        <div className="relative flex flex-col min-h-screen bg-[#dde4ec] overflow-hidden font-['Noto_Sans','Noto_Sans_CJK_SC',sans-serif]">
            <Header />
            <div className="flex flex-1">
                <Sidebar />
                <main className="flex flex-col flex-1 min-w-0 pl-[15px]">
                    <PatientBar />
                    <div className="flex flex-1 gap-[11px] mt-[21px] mr-[9px]">
                        <PlanPanel />
                        <TemplatePanel />
                    </div>
                    <Dock />
                </main>
                <div className="flex items-center justify-end w-[57px] shrink-0 pr-[7px]">
                    <button aria-label="收起" className="text-[#3590ee]">
                        <Icon className="w-[28px] h-[28px]" width={4}><circle cx="16" cy="16" r="13" /><path d="m14 11 5 5-5 5" /></Icon>
                    </button>
                </div>
                <PatientsAside />
            </div>
            <Recorder />
            <ImeBar />
            <p className="absolute left-1/2 bottom-[71px] -translate-x-1/2 text-[40px] leading-[60px] font-bold text-white whitespace-nowrap [-webkit-text-stroke:5px_#111] [paint-order:stroke_fill]">选择症状的处方的名称</p>
        </div>
    );
}
